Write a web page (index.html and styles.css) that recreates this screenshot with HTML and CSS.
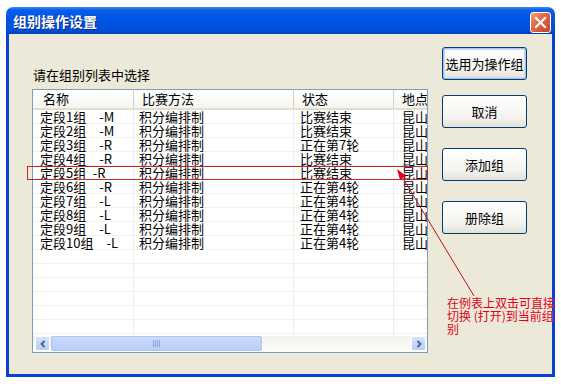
FILE: index.html
```html
<!DOCTYPE html>
<html lang="zh-CN">
<head>
  <meta charset="UTF-8">
  <title>组别操作设置</title>
  <link rel="stylesheet" href="styles.css">
</head>
<body>
  <div class="window">
    <div class="titlebar">
      <span class="title">组别操作设置</span>
      <div class="close-btn">
        <svg width="13" height="13" viewBox="0 0 13 13"><path d="M2 2 L11 11 M11 2 L2 11" stroke="#fff" stroke-width="2.2" stroke-linecap="square"/></svg>
      </div>
    </div>

    <div class="client">
      <div class="left">
        <div class="prompt">请在组别列表中选择</div>
        <div class="listview">
          <div class="lv-body">
            <div class="lv-row lv-header">
              <div class="cell c1">名称</div>
              <div class="cell c2">比赛方法</div>
              <div class="cell c3">状态</div>
              <div class="cell c4">地点</div>
            </div>
            <div class="lv-row"><div class="cell c1">定段1组&ensp;&ensp;-M</div><div class="cell c2">积分编排制</div><div class="cell c3">比赛结束</div><div class="cell c4">昆山市</div></div>
            <div class="lv-row"><div class="cell c1">定段2组&ensp;&ensp;-M</div><div class="cell c2">积分编排制</div><div class="cell c3">比赛结束</div><div class="cell c4">昆山市</div></div>
            <div class="lv-row"><div class="cell c1">定段3组&ensp;&ensp;-R</div><div class="cell c2">积分编排制</div><div class="cell c3">正在第7轮</div><div class="cell c4">昆山市</div></div>
            <div class="lv-row"><div class="cell c1">定段4组&ensp;&ensp;-R</div><div class="cell c2">积分编排制</div><div class="cell c3">比赛结束</div><div class="cell c4">昆山市</div></div>
            <div class="lv-row"><div class="cell c1">定段5组&ensp;-R</div><div class="cell c2">积分编排制</div><div class="cell c3">比赛结束</div><div class="cell c4">昆山市</div></div>
            <div class="lv-row"><div class="cell c1">定段6组&ensp;&ensp;-R</div><div class="cell c2">积分编排制</div><div class="cell c3">正在第4轮</div><div class="cell c4">昆山市</div></div>
            <div class="lv-row"><div class="cell c1">定段7组&ensp;&ensp;-L</div><div class="cell c2">积分编排制</div><div class="cell c3">正在第4轮</div><div class="cell c4">昆山市</div></div>
            <div class="lv-row"><div class="cell c1">定段8组&ensp;&ensp;-L</div><div class="cell c2">积分编排制</div><div class="cell c3">正在第4轮</div><div class="cell c4">昆山市</div></div>
            <div class="lv-row"><div class="cell c1">定段9组&ensp;&ensp;-L</div><div class="cell c2">积分编排制</div><div class="cell c3">正在第4轮</div><div class="cell c4">昆山市</div></div>
            <div class="lv-row"><div class="cell c1">定段10组&ensp;&ensp;-L</div><div class="cell c2">积分编排制</div><div class="cell c3">正在第4轮</div><div class="cell c4">昆山市</div></div>
            <div class="lv-row"><div class="cell c1"></div><div class="cell c2"></div><div class="cell c3"></div><div class="cell c4"></div></div>
            <div class="lv-row"><div class="cell c1"></div><div class="cell c2"></div><div class="cell c3"></div><div class="cell c4"></div></div>
            <div class="lv-row"><div class="cell c1"></div><div class="cell c2"></div><div class="cell c3"></div><div class="cell c4"></div></div>
            <div class="lv-row"><div class="cell c1"></div><div class="cell c2"></div><div class="cell c3"></div><div class="cell c4"></div></div>
            <div class="lv-row"><div class="cell c1"></div><div class="cell c2"></div><div class="cell c3"></div><div class="cell c4"></div></div>
            <div class="lv-row"><div class="cell c1"></div><div class="cell c2"></div><div class="cell c3"></div><div class="cell c4"></div></div>
            <div class="lv-row"><div class="cell c1"></div><div class="cell c2"></div><div class="cell c3"></div><div class="cell c4"></div></div>
          </div>
          <div class="hscroll">
            <div class="sb-btn">
              <svg width="8" height="8" viewBox="0 0 8 8"><path d="M5.5 1 L2.5 4 L5.5 7" fill="none" stroke="#4d6185" stroke-width="1.8"/></svg>
            </div>
            <div class="sb-thumb"><span class="grip"></span></div>
            <div class="sb-track"></div>
            <div class="sb-btn">
              <svg width="8" height="8" viewBox="0 0 8 8"><path d="M2.5 1 L5.5 4 L2.5 7" fill="none" stroke="#4d6185" stroke-width="1.8"/></svg>
            </div>
          </div>
        </div>
      </div>

      <div class="buttons">
        <button class="btn btn-default">选用为操作组</button>
        <button class="btn btn-cancel">取消</button>
        <button class="btn btn-spaced">添加组</button>
        <button class="btn btn-spaced">册除组</button>
      </div>
    </div>
  </div>

  <!-- annotation drawn over the screenshot -->
  <svg class="annot" width="561" height="384" viewBox="0 0 561 384">
    <rect x="27.5" y="166.5" width="400" height="13" fill="none" stroke="#c0262d" stroke-width="1"/>
    <line x1="474" y1="296" x2="401" y2="175" stroke="#c0101c" stroke-width="1"/>
    <polygon points="397,169 406,176 400,180" fill="#e0001b"/>
  </svg>
  <div class="annot-text">在例表上双击可直接<br>切换 (打开)到当前组<br>别</div>
</body>
</html>
```

FILE: styles.css
```css
body {
  margin: 0;
  background: #fff;
  font-family: "Noto Sans CJK SC", "Liberation Sans", sans-serif;
  font-size: 13px;
  color: #000;
}
.window {
  margin: 7px 0 0 6px;
  width: 549px;
}
.titlebar {
  height: 27px;
  display: flex;
  align-items: center;
  justify-content: space-between;
  padding: 0 4px 0 7px;
  border-radius: 7px 7px 0 0;
  background: linear-gradient(#3a8cf8 0, #0a5ee6 3px, #0055e5 40%, #0050dc 85%, #0340b8 100%);
}
.title {
  color: #fff;
  font-weight: bold;
  font-size: 14px;
  text-shadow: 1px 1px 0 #0a2a8a;
}
.close-btn {
  width: 19px;
  height: 19px;
  margin-top: 3px;
  border: 1px solid #fff;
  border-radius: 3px;
  background: linear-gradient(135deg, #f0a080 0, #e06a45 40%, #c8432a 100%);
  display: flex;
  align-items: center;
  justify-content: center;
}
.client {
  height: 340px;
  display: flex;
  background: #ece9d8;
  border: 3px solid #0842d0;
  border-top: none;
  padding-left: 23px;
}
.left {
  width: 396px;
  padding-top: 33px;
}
.prompt {
  line-height: 15px;
  padding-left: 1px;
  margin-bottom: 7px;
}
.listview {
  width: 394px;
  border: 1px solid #7f9db9;
  background: #fff;
}
.lv-body {
  height: 246px;
  overflow: hidden;
}
.lv-row {
  display: flex;
  height: 14px;
  width: 520px;
  background: linear-gradient(transparent 13px, #f1f0ea 13px);
}
.cell {
  box-sizing: border-box;
  height: 14px;
  line-height: 14px;
  white-space: nowrap;
  border-right: 1px solid #eeede6;
}
.c1 { width: 101px; padding-left: 7px; }
.c2 { width: 160px; padding-left: 5px; }
.c3 { width: 100px; padding-left: 6px; }
.c4 { width: 120px; padding-left: 8px; }
.lv-header {
  height: 20px;
  background: linear-gradient(#ffffff, #f6f5f0);
  border-bottom: 2px solid #e2decd;
  box-sizing: border-box;
}
.lv-header .cell {
  height: 18px;
  line-height: 18px;
  border-right: 1px solid #d6d2c2;
}
.lv-header .c1 { padding-left: 10px; }
.lv-header .c2 { padding-left: 8px; }
.lv-header .c3 { padding-left: 8px; }
.hscroll {
  height: 16px;
  display: flex;
  padding: 0 1px 0 2px;
  background: linear-gradient(#f3f1ec, #fefefb);
}
.sb-btn {
  width: 15px;
  height: 15px;
  box-sizing: border-box;
  border: 1px solid #fff;
  border-radius: 2px;
  background: linear-gradient(#d6e2fc, #b8cdf7);
  display: flex;
  align-items: center;
  justify-content: center;
}
.sb-thumb {
  width: 211px;
  height: 15px;
  margin-left: 1px;
  box-sizing: border-box;
  border: 1px solid #aec4f4;
  border-radius: 2px;
  background: linear-gradient(#cbdafc, #b9cdf8);
  display: flex;
  align-items: center;
  justify-content: center;
}
.grip {
  width: 7px;
  height: 7px;
  background: repeating-linear-gradient(90deg, #8aa4de 0 1px, transparent 1px 2px);
}
.sb-track {
  flex: 1;
}
.buttons {
  display: flex;
  flex-direction: column;
  margin-left: 14px;
  padding-top: 13px;
}
.btn {
  width: 85px;
  height: 33px;
  font-family: inherit;
  font-size: 13px;
  color: #000;
  border: 1px solid #003c74;
  border-radius: 3px;
  background: linear-gradient(#ffffff, #f4f3ee 70%, #e3e1d6);
  padding: 0;
}
.btn-default {
  box-shadow: inset 0 0 0 1px #a7c2f3, inset 0 0 0 2px #cad9f7;
}
.btn-cancel { margin-top: 15px; }
.btn-spaced { margin-top: 20px; }
.annot {
  position: absolute;
  left: 0;
  top: 0;
  pointer-events: none;
}
.annot-text {
  position: absolute;
  left: 447px;
  top: 296px;
  font-size: 12px;
  line-height: 13px;
  color: #e0001b;
  white-space: nowrap;
}
```
